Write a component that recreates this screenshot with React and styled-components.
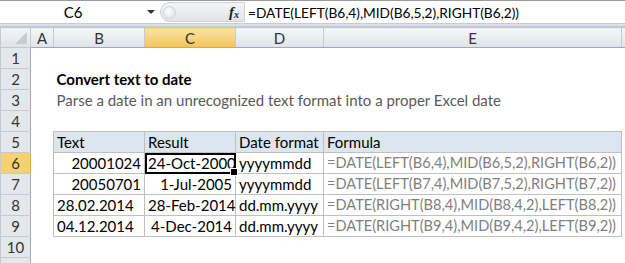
import React from 'react';
import styled, { createGlobalStyle, css } from 'styled-components';

const Global = createGlobalStyle`
  html, body { margin: 0; padding: 0; background: #fff; overflow: hidden; }
  body { font-family: Lato, "Open Sans", sans-serif; font-size: 15px; color: #000; }
  * { box-sizing: border-box; }
`;

const columns = ['A', 'B', 'C', 'D', 'E', ''];
const widths = [30, 23, 91, 91, 88, 298, 40];

const rows = [
  { n: 1 },
  { n: 2, title: 'Convert text to date' },
  { n: 3, sub: 'Parse a date in an unrecognized text format into a proper Excel date' },
  { n: 4 },
  { n: 5, head: ['Text', 'Result', 'Date format', 'Formula'] },
  { n: 6, data: ['20001024', '24-Oct-2000', 'yyyymmdd', '=DATE(LEFT(B6,4),MID(B6,5,2),RIGHT(B6,2))'], num: true },
  { n: 7, data: ['20050701', '1-Jul-2005', 'yyyymmdd', '=DATE(LEFT(B7,4),MID(B7,5,2),RIGHT(B7,2))'], num: true },
  { n: 8, data: ['28.02.2014', '28-Feb-2014', 'dd.mm.yyyy', '=DATE(RIGHT(B8,4),MID(B8,4,2),LEFT(B8,2))'] },
  { n: 9, data: ['04.12.2014', '4-Dec-2014', 'dd.mm.yyyy', '=DATE(RIGHT(B9,4),MID(B9,4,2),LEFT(B9,2))'] },
  { n: 10 },
  { n: 11 },
];

function App() {
  return (
    <>
      <Global />
      <FormulaBar>
        <NameBox>
          <span>C6</span>
          <Caret />
        </NameBox>
        <Handle>
          <Knob />
          <Fx>f<sub>x</sub></Fx>
        </Handle>
        <FormulaInput>=DATE(LEFT(B6,4),MID(B6,5,2),RIGHT(B6,2))</FormulaInput>
      </FormulaBar>
      <Band />
      <Sheet>
        <colgroup>
          {widths.map((w, i) => <col key={i} style={{ width: w }} />)}
        </colgroup>
        <thead>
          <HeaderRow>
            <Corner><CornerTri /></Corner>
            {columns.map((c) => (
              <ColHead key={c || 'F'} $active={c === 'C'}>{c}</ColHead>
            ))}
          </HeaderRow>
        </thead>
        <tbody>
          {rows.map((r) => (
            <Row key={r.n}>
              <RowHead $active={r.n === 6}>{r.n}</RowHead>
              <Cell />
              {r.title && <Cell colSpan={5}><Title>{r.title}</Title></Cell>}
              {r.sub && <Cell colSpan={5}><Sub>{r.sub}</Sub></Cell>}
              {r.head && (
                <>
                  {r.head.map((h) => <HeadCell key={h}>{h}</HeadCell>)}
                  <Cell />
                </>
              )}
              {r.data && (
                <>
                  <DataCell $right={r.num}>{r.data[0]}</DataCell>
                  <DataCell $right $selected={r.n === 6}>{r.data[1]}</DataCell>
                  <DataCell>{r.data[2]}</DataCell>
                  <DataCell $formula>{r.data[3]}</DataCell>
                  <Cell />
                </>
              )}
              {!r.title && !r.sub && !r.head && !r.data && (
                <>
                  <Cell /><Cell /><Cell /><Cell /><Cell />
                </>
              )}
            </Row>
          ))}
        </tbody>
      </Sheet>
    </>
  );
}

const FormulaBar = styled.div`
  display: flex;
  align-items: stretch;
  height: 23px;
  border-top: 1px solid #9a9a9a;
  background: #fff;
`;

const NameBox = styled.div`
  width: 160px;
  display: flex;
  align-items: center;
  position: relative;
  span { flex: 1; text-align: center; padding-right: 14px; }
`;

const Caret = styled.i`
  position: absolute;
  right: 5px;
  top: 9px;
  width: 0;
  height: 0;
  border-left: 4px solid transparent;
  border-right: 4px solid transparent;
  border-top: 4px solid #333;
`;

const Handle = styled.div`
  width: 85px;
  margin: 1px 0;
  border: 1px solid #cfd2d6;
  border-radius: 10px 0 0 10px;
  background: linear-gradient(#f4f5f6, #e2e4e7);
  display: flex;
  align-items: center;
  justify-content: space-between;
  padding: 0 5px 0 2px;
`;

const Knob = styled.span`
  width: 13px;
  height: 13px;
  border-radius: 50%;
  background: radial-gradient(circle at 40% 40%, #fff, #d9dcdf);
  border: 1px solid #d0d3d7;
`;

const Fx = styled.span`
  font-family: "Liberation Serif", serif;
  font-style: italic;
  font-weight: bold;
  font-size: 15px;
  color: #222;
  sub { font-size: 10px; vertical-align: -1px; }
`;

const FormulaInput = styled.div`
  flex: 1;
  display: flex;
  align-items: center;
  padding-left: 3px;
  font-size: 13.7px;
  white-space: nowrap;
`;

const Band = styled.div`
  height: 4px;
  background: #dde1e6;
  border-top: 1px solid #c8ccd2;
  border-bottom: 1px solid #c3c8ce;
`;

const Sheet = styled.table`
  border-collapse: collapse;
  table-layout: fixed;
  width: ${widths.reduce((a, b) => a + b, 0)}px;
  td, th { padding: 0; white-space: nowrap; overflow: visible; line-height: 18px; }
`;

const HeaderRow = styled.tr`
  height: 20px;
`;

const Row = styled.tr`
  height: 21px;
`;

const headerBase = css`
  font-weight: normal;
  color: #333;
  text-align: center;
  border: 1px solid #c5cad1;
`;

const Corner = styled.th`
  ${headerBase};
  position: relative;
  background: linear-gradient(#f3f5f8, #dfe3e8);
`;

const CornerTri = styled.i`
  position: absolute;
  right: 3px;
  bottom: 3px;
  width: 0;
  height: 0;
  border-left: 12px solid transparent;
  border-bottom: 12px solid #c7ccd2;
`;

const ColHead = styled.th`
  ${headerBase};
  background: ${(p) => (p.$active
    ? 'linear-gradient(#fbe3a6, #f2c459)'
    : 'linear-gradient(#f5f7f9, #dfe3e8)')};
  border-bottom-color: ${(p) => (p.$active ? '#e2a93b' : '#9eaab8')};
`;

const RowHead = styled.th`
  ${headerBase};
  background: ${(p) => (p.$active ? '#f7d16e' : '#e4e8ed')};
  border-right-color: ${(p) => (p.$active ? '#e2a93b' : '#9eaab8')};
`;

const Cell = styled.td`
  padding: 0 3px !important;
`;

const Title = styled.span`
  font-weight: bold;
`;

const Sub = styled.span`
  color: #595959;
`;

const tableBorder = css`
  border: 1px solid #c0c0c0;
  padding: 0 3px !important;
`;

const HeadCell = styled.td`
  ${tableBorder};
  background: #dce6f1;
`;

const DataCell = styled.td`
  ${tableBorder};
  text-align: ${(p) => (p.$right ? 'right' : 'left')};
  color: ${(p) => (p.$formula ? '#7f7f7f' : '#000')};
  font-size: ${(p) => (p.$formula ? '14.6px' : '15px')};
  position: relative;
  ${(p) => p.$selected && css`
    outline: 2px solid #000;
    outline-offset: -2px;
    &::after {
      content: '';
      position: absolute;
      right: -3px;
      bottom: -3px;
      width: 6px;
      height: 6px;
      background: #000;
      border: 1px solid #fff;
    }
  `}
`;

export default App;
